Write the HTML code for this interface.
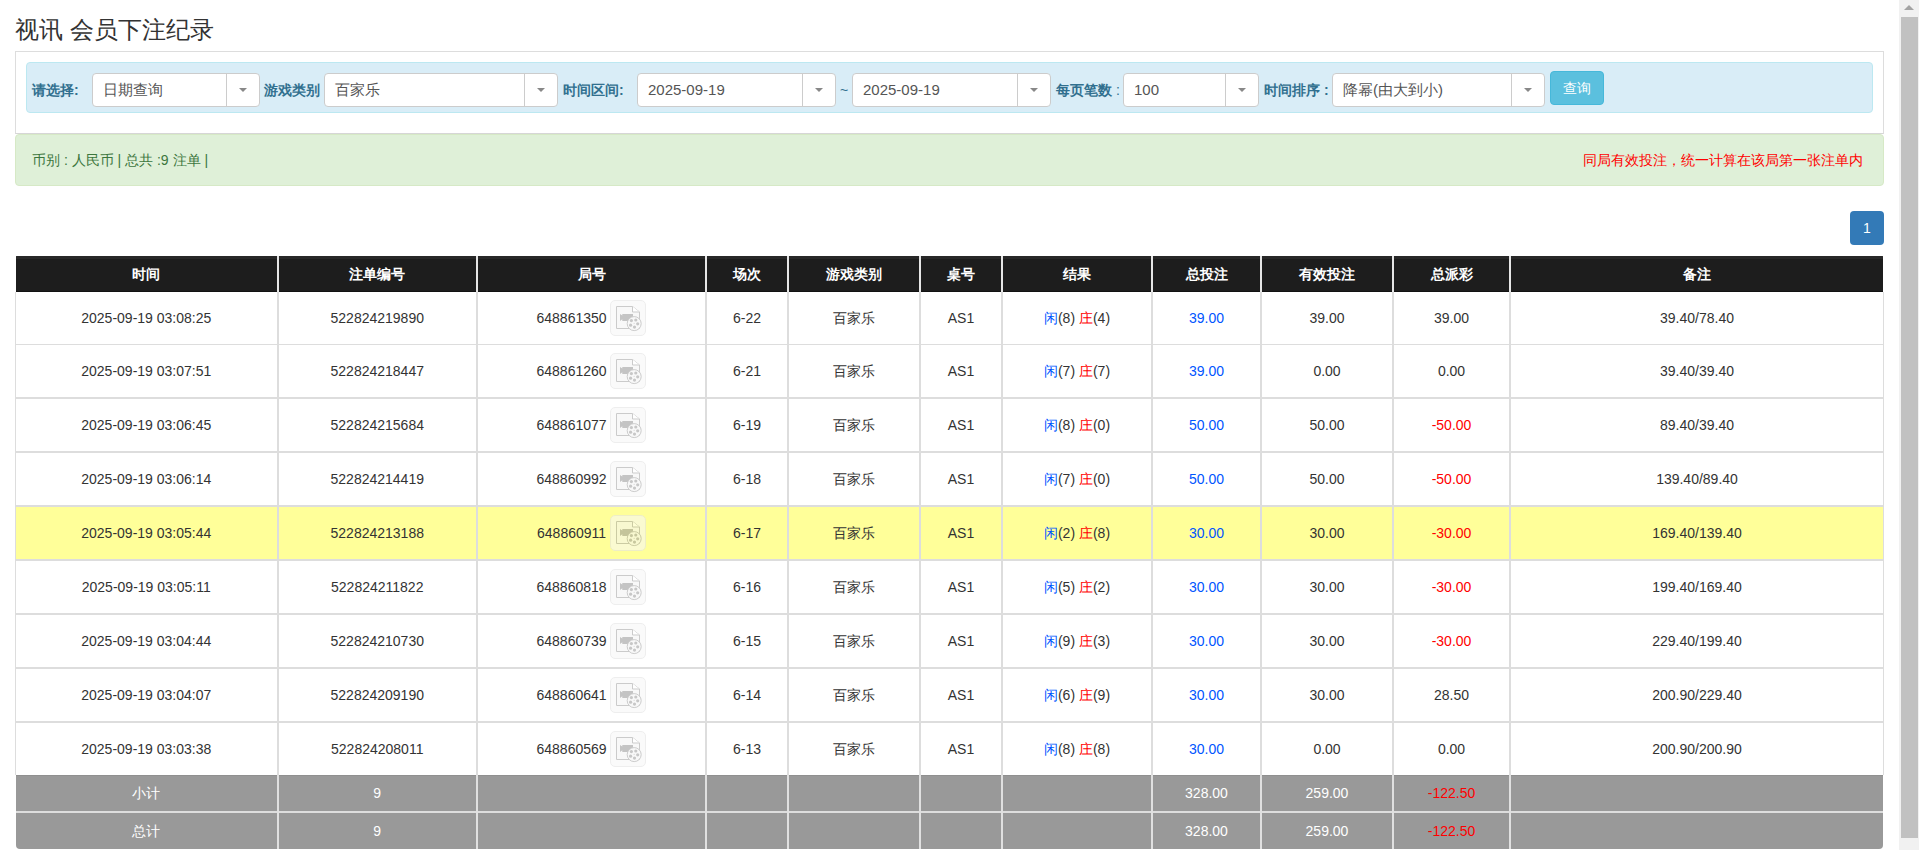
<!DOCTYPE html><html><head><meta charset="utf-8"><style>
html,body{margin:0;padding:0;background:#fff;}
body{font-family:"Liberation Sans",sans-serif;color:#333;width:1919px;height:850px;overflow:hidden;position:relative;}
.abs{position:absolute;}
.title{left:15px;top:12px;font-size:24px;line-height:36px;color:#333;white-space:nowrap;}
.panel{left:15px;top:51px;width:1867px;height:81px;border:1px solid #ddd;border-bottom:1px solid #d6d6d6;}
.bar{left:26px;top:62px;width:1845px;height:49px;border:1px solid #bce8f1;background:#d9edf7;border-radius:4px;}
.lbl{font-size:14px;font-weight:bold;color:#31708f;top:81px;line-height:18px;white-space:nowrap;}
.sel{top:73px;height:32px;border:1px solid #ccc;border-radius:4px;background:#fff;}
.sel .t{position:absolute;left:10px;top:6px;font-size:15px;line-height:20px;color:#555;white-space:nowrap;}
.sel .d{position:absolute;right:32px;top:0;width:1px;height:32px;background:#ccc;}
.sel .a{position:absolute;right:12px;top:14px;width:0;height:0;border-left:4px solid transparent;border-right:4px solid transparent;border-top:4px solid #888;}
.btn{left:1550px;top:71px;width:52px;height:32px;border:1px solid #46b8da;background:#5bc0de;border-radius:4px;color:#fff;font-size:14px;line-height:32px;text-align:center;}
.green{left:15px;top:134px;width:1867px;height:50px;border:1px solid #d6e9c6;background:#dff0d8;border-radius:4px;}
.gt{left:32px;top:151px;font-size:14px;line-height:18px;color:#3c763d;white-space:nowrap;}
.rt{right:56px;top:151px;font-size:14px;line-height:18px;color:#f00;white-space:nowrap;}
.pg{left:1850px;top:211px;width:34px;height:34px;background:#337ab7;border-radius:4px;color:#fff;font-size:14px;line-height:34px;text-align:center;}
.sb{left:1899px;top:0;width:20px;height:850px;background:#f1f1f1;}
.thumb{left:1901px;top:17px;width:17px;height:821px;background:#c1c1c1;}
.up{left:1904px;top:5px;width:0;height:0;border-left:5px solid transparent;border-right:5px solid transparent;border-bottom:5px solid #a3a3a3;}
.cell{position:absolute;text-align:center;white-space:nowrap;}
.fx{display:flex;align-items:center;justify-content:center;}
.ic{display:block;}
</style></head><body>

<div class="abs title">视讯 会员下注纪录</div>
<div class="abs panel"></div><div class="abs bar"></div>
<div class="abs lbl" style="left:32px">请选择:</div>
<div class="abs lbl" style="left:264px">游戏类别</div>
<div class="abs lbl" style="left:563px">时间区间:</div>
<div class="abs lbl" style="left:1056px">每页笔数<span style="font-weight:normal"> :</span></div>
<div class="abs lbl" style="left:1264px">时间排序 :</div>
<div class="abs lbl" style="left:840px;font-weight:normal">~</div>
<div class="abs sel" style="left:92px;width:166px"><span class="t">日期查询</span><i class="d"></i><i class="a"></i></div>
<div class="abs sel" style="left:324px;width:232px"><span class="t">百家乐</span><i class="d"></i><i class="a"></i></div>
<div class="abs sel" style="left:637px;width:197px"><span class="t">2025-09-19</span><i class="d"></i><i class="a"></i></div>
<div class="abs sel" style="left:852px;width:197px"><span class="t">2025-09-19</span><i class="d"></i><i class="a"></i></div>
<div class="abs sel" style="left:1123px;width:134px"><span class="t">100</span><i class="d"></i><i class="a"></i></div>
<div class="abs sel" style="left:1332px;width:211px"><span class="t">降幂(由大到小)</span><i class="d"></i><i class="a"></i></div>
<div class="abs btn">查询</div>
<div class="abs green"></div><div class="abs gt">币别 : 人民币 | 总共 :9 注单 |</div><div class="abs rt">同局有效投注，统一计算在该局第一张注单内</div>
<div class="abs pg">1</div>
<div class="abs" style="left:16px;top:256px;width:1867px;height:36px;background:#1d1d1d;border-radius:1px 1px 0 0"></div>
<div class="abs" style="left:16px;top:256px;width:1867px;height:3px;background:#282828;border-radius:1px 1px 0 0"></div>
<div class="abs" style="left:16px;top:291px;width:1867px;height:1px;background:#121212"></div>
<div class="abs" style="left:15px;top:292px;width:1869px;height:483px;background:#fff"></div>
<div class="abs" style="left:15px;top:507px;width:1869px;height:52px;background:#ffff99"></div>
<div class="abs" style="left:16px;top:775px;width:1867px;height:74px;background:#999;border-radius:0 0 4px 4px"></div>
<div class="abs" style="left:16px;top:775px;width:1867px;height:1px;background:#8f8f8f"></div>
<div class="abs" style="left:16px;top:811px;width:1867px;height:2px;background:#ddd"></div>
<div class="abs" style="left:15px;top:344px;width:1869px;height:1px;background:#ddd"></div>
<div class="abs" style="left:15px;top:397px;width:1869px;height:2px;background:#ddd"></div>
<div class="abs" style="left:15px;top:451px;width:1869px;height:2px;background:#ddd"></div>
<div class="abs" style="left:15px;top:505px;width:1869px;height:2px;background:#ddd"></div>
<div class="abs" style="left:15px;top:559px;width:1869px;height:2px;background:#ddd"></div>
<div class="abs" style="left:15px;top:613px;width:1869px;height:2px;background:#ddd"></div>
<div class="abs" style="left:15px;top:667px;width:1869px;height:2px;background:#ddd"></div>
<div class="abs" style="left:15px;top:721px;width:1869px;height:2px;background:#ddd"></div>
<div class="abs" style="left:15px;top:292px;width:1px;height:483px;background:#ddd"></div>
<div class="abs" style="left:1883px;top:292px;width:1px;height:483px;background:#ddd"></div>
<div class="abs" style="left:277px;top:256px;width:2px;height:36px;background:#e6e6e6"></div>
<div class="abs" style="left:277px;top:292px;width:2px;height:483px;background:#ddd"></div>
<div class="abs" style="left:277px;top:775px;width:2px;height:74px;background:#e0e0e0"></div>
<div class="abs" style="left:476px;top:256px;width:2px;height:36px;background:#e6e6e6"></div>
<div class="abs" style="left:476px;top:292px;width:2px;height:483px;background:#ddd"></div>
<div class="abs" style="left:476px;top:775px;width:2px;height:74px;background:#e0e0e0"></div>
<div class="abs" style="left:705px;top:256px;width:2px;height:36px;background:#e6e6e6"></div>
<div class="abs" style="left:705px;top:292px;width:2px;height:483px;background:#ddd"></div>
<div class="abs" style="left:705px;top:775px;width:2px;height:74px;background:#e0e0e0"></div>
<div class="abs" style="left:787px;top:256px;width:2px;height:36px;background:#e6e6e6"></div>
<div class="abs" style="left:787px;top:292px;width:2px;height:483px;background:#ddd"></div>
<div class="abs" style="left:787px;top:775px;width:2px;height:74px;background:#e0e0e0"></div>
<div class="abs" style="left:919px;top:256px;width:2px;height:36px;background:#e6e6e6"></div>
<div class="abs" style="left:919px;top:292px;width:2px;height:483px;background:#ddd"></div>
<div class="abs" style="left:919px;top:775px;width:2px;height:74px;background:#e0e0e0"></div>
<div class="abs" style="left:1001px;top:256px;width:2px;height:36px;background:#e6e6e6"></div>
<div class="abs" style="left:1001px;top:292px;width:2px;height:483px;background:#ddd"></div>
<div class="abs" style="left:1001px;top:775px;width:2px;height:74px;background:#e0e0e0"></div>
<div class="abs" style="left:1151px;top:256px;width:2px;height:36px;background:#e6e6e6"></div>
<div class="abs" style="left:1151px;top:292px;width:2px;height:483px;background:#ddd"></div>
<div class="abs" style="left:1151px;top:775px;width:2px;height:74px;background:#e0e0e0"></div>
<div class="abs" style="left:1260px;top:256px;width:2px;height:36px;background:#e6e6e6"></div>
<div class="abs" style="left:1260px;top:292px;width:2px;height:483px;background:#ddd"></div>
<div class="abs" style="left:1260px;top:775px;width:2px;height:74px;background:#e0e0e0"></div>
<div class="abs" style="left:1392px;top:256px;width:2px;height:36px;background:#e6e6e6"></div>
<div class="abs" style="left:1392px;top:292px;width:2px;height:483px;background:#ddd"></div>
<div class="abs" style="left:1392px;top:775px;width:2px;height:74px;background:#e0e0e0"></div>
<div class="abs" style="left:1509px;top:256px;width:2px;height:36px;background:#e6e6e6"></div>
<div class="abs" style="left:1509px;top:292px;width:2px;height:483px;background:#ddd"></div>
<div class="abs" style="left:1509px;top:775px;width:2px;height:74px;background:#e0e0e0"></div>
<div class="cell" style="left:15px;width:262.5px;top:256px;height:36px;line-height:36px;color:#fff;font-weight:bold;font-size:14px">时间</div>
<div class="cell" style="left:277.5px;width:199.5px;top:256px;height:36px;line-height:36px;color:#fff;font-weight:bold;font-size:14px">注单编号</div>
<div class="cell" style="left:477px;width:229px;top:256px;height:36px;line-height:36px;color:#fff;font-weight:bold;font-size:14px">局号</div>
<div class="cell" style="left:706px;width:82px;top:256px;height:36px;line-height:36px;color:#fff;font-weight:bold;font-size:14px">场次</div>
<div class="cell" style="left:788px;width:132px;top:256px;height:36px;line-height:36px;color:#fff;font-weight:bold;font-size:14px">游戏类别</div>
<div class="cell" style="left:920px;width:82px;top:256px;height:36px;line-height:36px;color:#fff;font-weight:bold;font-size:14px">桌号</div>
<div class="cell" style="left:1002px;width:150px;top:256px;height:36px;line-height:36px;color:#fff;font-weight:bold;font-size:14px">结果</div>
<div class="cell" style="left:1152px;width:109px;top:256px;height:36px;line-height:36px;color:#fff;font-weight:bold;font-size:14px">总投注</div>
<div class="cell" style="left:1261px;width:132px;top:256px;height:36px;line-height:36px;color:#fff;font-weight:bold;font-size:14px">有效投注</div>
<div class="cell" style="left:1393px;width:117px;top:256px;height:36px;line-height:36px;color:#fff;font-weight:bold;font-size:14px">总派彩</div>
<div class="cell" style="left:1510px;width:374px;top:256px;height:36px;line-height:36px;color:#fff;font-weight:bold;font-size:14px">备注</div>
<div class="cell" style="left:15px;width:262.5px;top:292px;height:52px;line-height:52px;font-size:14px;color:#333">2025-09-19 03:08:25</div>
<div class="cell" style="left:277.5px;width:199.5px;top:292px;height:52px;line-height:52px;font-size:14px;color:#333">522824219890</div>
<div class="cell fx" style="left:477px;width:229px;top:292px;height:52px;font-size:14px;color:#333"><span style="white-space:pre">648861350 </span><svg class="ic" width="36" height="36" viewBox="0 0 36 36"><g opacity="0.6"><rect x="0.5" y="0.5" width="35" height="35" rx="4.5" fill="#f7f7f7" stroke="#e4e4e4"/>
<path d="M6.5 6.5H22.5L29.5 12V28.5H6.5Z" fill="#f5f5f5" stroke="#aaaaaa"/><path d="M22.5 6.5V12H29.5" fill="#ffffff" stroke="#aaaaaa"/>
<path d="M10 13.9L12.3 15.6V13.9H23V20.9H12.3V19.2L10 20.9Z" fill="#9d9d9d"/>
<circle cx="24.2" cy="23.6" r="7" fill="#f5f5f5" stroke="#aaaaaa"/>
<g fill="#a2a2a2"><circle cx="21.4" cy="20.6" r="1.6"/><circle cx="25.8" cy="20" r="1.6"/><circle cx="27.7" cy="23.8" r="1.6"/><circle cx="24.5" cy="27.1" r="1.6"/><circle cx="20.6" cy="25.2" r="1.6"/><circle cx="24.1" cy="23.3" r="0.5"/></g>
</g></svg></div>
<div class="cell" style="left:706px;width:82px;top:292px;height:52px;line-height:52px;font-size:14px;color:#333">6-22</div>
<div class="cell" style="left:788px;width:132px;top:292px;height:52px;line-height:52px;font-size:14px;color:#333">百家乐</div>
<div class="cell" style="left:920px;width:82px;top:292px;height:52px;line-height:52px;font-size:14px;color:#333">AS1</div>
<div class="cell" style="left:1002px;width:150px;top:292px;height:52px;line-height:52px;font-size:14px;color:#333"><span style="color:#0055ff">闲</span>(8) <span style="color:#f00">庄</span>(4)</div>
<div class="cell" style="left:1152px;width:109px;top:292px;height:52px;line-height:52px;font-size:14px;color:#0055ff">39.00</div>
<div class="cell" style="left:1261px;width:132px;top:292px;height:52px;line-height:52px;font-size:14px;color:#333">39.00</div>
<div class="cell" style="left:1393px;width:117px;top:292px;height:52px;line-height:52px;font-size:14px;color:#333">39.00</div>
<div class="cell" style="left:1510px;width:374px;top:292px;height:52px;line-height:52px;font-size:14px;color:#333">39.40/78.40</div>
<div class="cell" style="left:15px;width:262.5px;top:345px;height:52px;line-height:52px;font-size:14px;color:#333">2025-09-19 03:07:51</div>
<div class="cell" style="left:277.5px;width:199.5px;top:345px;height:52px;line-height:52px;font-size:14px;color:#333">522824218447</div>
<div class="cell fx" style="left:477px;width:229px;top:345px;height:52px;font-size:14px;color:#333"><span style="white-space:pre">648861260 </span><svg class="ic" width="36" height="36" viewBox="0 0 36 36"><g opacity="0.6"><rect x="0.5" y="0.5" width="35" height="35" rx="4.5" fill="#f7f7f7" stroke="#e4e4e4"/>
<path d="M6.5 6.5H22.5L29.5 12V28.5H6.5Z" fill="#f5f5f5" stroke="#aaaaaa"/><path d="M22.5 6.5V12H29.5" fill="#ffffff" stroke="#aaaaaa"/>
<path d="M10 13.9L12.3 15.6V13.9H23V20.9H12.3V19.2L10 20.9Z" fill="#9d9d9d"/>
<circle cx="24.2" cy="23.6" r="7" fill="#f5f5f5" stroke="#aaaaaa"/>
<g fill="#a2a2a2"><circle cx="21.4" cy="20.6" r="1.6"/><circle cx="25.8" cy="20" r="1.6"/><circle cx="27.7" cy="23.8" r="1.6"/><circle cx="24.5" cy="27.1" r="1.6"/><circle cx="20.6" cy="25.2" r="1.6"/><circle cx="24.1" cy="23.3" r="0.5"/></g>
</g></svg></div>
<div class="cell" style="left:706px;width:82px;top:345px;height:52px;line-height:52px;font-size:14px;color:#333">6-21</div>
<div class="cell" style="left:788px;width:132px;top:345px;height:52px;line-height:52px;font-size:14px;color:#333">百家乐</div>
<div class="cell" style="left:920px;width:82px;top:345px;height:52px;line-height:52px;font-size:14px;color:#333">AS1</div>
<div class="cell" style="left:1002px;width:150px;top:345px;height:52px;line-height:52px;font-size:14px;color:#333"><span style="color:#0055ff">闲</span>(7) <span style="color:#f00">庄</span>(7)</div>
<div class="cell" style="left:1152px;width:109px;top:345px;height:52px;line-height:52px;font-size:14px;color:#0055ff">39.00</div>
<div class="cell" style="left:1261px;width:132px;top:345px;height:52px;line-height:52px;font-size:14px;color:#333">0.00</div>
<div class="cell" style="left:1393px;width:117px;top:345px;height:52px;line-height:52px;font-size:14px;color:#333">0.00</div>
<div class="cell" style="left:1510px;width:374px;top:345px;height:52px;line-height:52px;font-size:14px;color:#333">39.40/39.40</div>
<div class="cell" style="left:15px;width:262.5px;top:399px;height:52px;line-height:52px;font-size:14px;color:#333">2025-09-19 03:06:45</div>
<div class="cell" style="left:277.5px;width:199.5px;top:399px;height:52px;line-height:52px;font-size:14px;color:#333">522824215684</div>
<div class="cell fx" style="left:477px;width:229px;top:399px;height:52px;font-size:14px;color:#333"><span style="white-space:pre">648861077 </span><svg class="ic" width="36" height="36" viewBox="0 0 36 36"><g opacity="0.6"><rect x="0.5" y="0.5" width="35" height="35" rx="4.5" fill="#f7f7f7" stroke="#e4e4e4"/>
<path d="M6.5 6.5H22.5L29.5 12V28.5H6.5Z" fill="#f5f5f5" stroke="#aaaaaa"/><path d="M22.5 6.5V12H29.5" fill="#ffffff" stroke="#aaaaaa"/>
<path d="M10 13.9L12.3 15.6V13.9H23V20.9H12.3V19.2L10 20.9Z" fill="#9d9d9d"/>
<circle cx="24.2" cy="23.6" r="7" fill="#f5f5f5" stroke="#aaaaaa"/>
<g fill="#a2a2a2"><circle cx="21.4" cy="20.6" r="1.6"/><circle cx="25.8" cy="20" r="1.6"/><circle cx="27.7" cy="23.8" r="1.6"/><circle cx="24.5" cy="27.1" r="1.6"/><circle cx="20.6" cy="25.2" r="1.6"/><circle cx="24.1" cy="23.3" r="0.5"/></g>
</g></svg></div>
<div class="cell" style="left:706px;width:82px;top:399px;height:52px;line-height:52px;font-size:14px;color:#333">6-19</div>
<div class="cell" style="left:788px;width:132px;top:399px;height:52px;line-height:52px;font-size:14px;color:#333">百家乐</div>
<div class="cell" style="left:920px;width:82px;top:399px;height:52px;line-height:52px;font-size:14px;color:#333">AS1</div>
<div class="cell" style="left:1002px;width:150px;top:399px;height:52px;line-height:52px;font-size:14px;color:#333"><span style="color:#0055ff">闲</span>(8) <span style="color:#f00">庄</span>(0)</div>
<div class="cell" style="left:1152px;width:109px;top:399px;height:52px;line-height:52px;font-size:14px;color:#0055ff">50.00</div>
<div class="cell" style="left:1261px;width:132px;top:399px;height:52px;line-height:52px;font-size:14px;color:#333">50.00</div>
<div class="cell" style="left:1393px;width:117px;top:399px;height:52px;line-height:52px;font-size:14px;color:#f00">-50.00</div>
<div class="cell" style="left:1510px;width:374px;top:399px;height:52px;line-height:52px;font-size:14px;color:#333">89.40/39.40</div>
<div class="cell" style="left:15px;width:262.5px;top:453px;height:52px;line-height:52px;font-size:14px;color:#333">2025-09-19 03:06:14</div>
<div class="cell" style="left:277.5px;width:199.5px;top:453px;height:52px;line-height:52px;font-size:14px;color:#333">522824214419</div>
<div class="cell fx" style="left:477px;width:229px;top:453px;height:52px;font-size:14px;color:#333"><span style="white-space:pre">648860992 </span><svg class="ic" width="36" height="36" viewBox="0 0 36 36"><g opacity="0.6"><rect x="0.5" y="0.5" width="35" height="35" rx="4.5" fill="#f7f7f7" stroke="#e4e4e4"/>
<path d="M6.5 6.5H22.5L29.5 12V28.5H6.5Z" fill="#f5f5f5" stroke="#aaaaaa"/><path d="M22.5 6.5V12H29.5" fill="#ffffff" stroke="#aaaaaa"/>
<path d="M10 13.9L12.3 15.6V13.9H23V20.9H12.3V19.2L10 20.9Z" fill="#9d9d9d"/>
<circle cx="24.2" cy="23.6" r="7" fill="#f5f5f5" stroke="#aaaaaa"/>
<g fill="#a2a2a2"><circle cx="21.4" cy="20.6" r="1.6"/><circle cx="25.8" cy="20" r="1.6"/><circle cx="27.7" cy="23.8" r="1.6"/><circle cx="24.5" cy="27.1" r="1.6"/><circle cx="20.6" cy="25.2" r="1.6"/><circle cx="24.1" cy="23.3" r="0.5"/></g>
</g></svg></div>
<div class="cell" style="left:706px;width:82px;top:453px;height:52px;line-height:52px;font-size:14px;color:#333">6-18</div>
<div class="cell" style="left:788px;width:132px;top:453px;height:52px;line-height:52px;font-size:14px;color:#333">百家乐</div>
<div class="cell" style="left:920px;width:82px;top:453px;height:52px;line-height:52px;font-size:14px;color:#333">AS1</div>
<div class="cell" style="left:1002px;width:150px;top:453px;height:52px;line-height:52px;font-size:14px;color:#333"><span style="color:#0055ff">闲</span>(7) <span style="color:#f00">庄</span>(0)</div>
<div class="cell" style="left:1152px;width:109px;top:453px;height:52px;line-height:52px;font-size:14px;color:#0055ff">50.00</div>
<div class="cell" style="left:1261px;width:132px;top:453px;height:52px;line-height:52px;font-size:14px;color:#333">50.00</div>
<div class="cell" style="left:1393px;width:117px;top:453px;height:52px;line-height:52px;font-size:14px;color:#f00">-50.00</div>
<div class="cell" style="left:1510px;width:374px;top:453px;height:52px;line-height:52px;font-size:14px;color:#333">139.40/89.40</div>
<div class="cell" style="left:15px;width:262.5px;top:507px;height:52px;line-height:52px;font-size:14px;color:#333">2025-09-19 03:05:44</div>
<div class="cell" style="left:277.5px;width:199.5px;top:507px;height:52px;line-height:52px;font-size:14px;color:#333">522824213188</div>
<div class="cell fx" style="left:477px;width:229px;top:507px;height:52px;font-size:14px;color:#333"><span style="white-space:pre">648860911 </span><svg class="ic" width="36" height="36" viewBox="0 0 36 36"><g opacity="0.6"><rect x="0.5" y="0.5" width="35" height="35" rx="4.5" fill="#f7f7f7" stroke="#e4e4e4"/>
<path d="M6.5 6.5H22.5L29.5 12V28.5H6.5Z" fill="#f5f5f5" stroke="#aaaaaa"/><path d="M22.5 6.5V12H29.5" fill="#ffffff" stroke="#aaaaaa"/>
<path d="M10 13.9L12.3 15.6V13.9H23V20.9H12.3V19.2L10 20.9Z" fill="#9d9d9d"/>
<circle cx="24.2" cy="23.6" r="7" fill="#f5f5f5" stroke="#aaaaaa"/>
<g fill="#a2a2a2"><circle cx="21.4" cy="20.6" r="1.6"/><circle cx="25.8" cy="20" r="1.6"/><circle cx="27.7" cy="23.8" r="1.6"/><circle cx="24.5" cy="27.1" r="1.6"/><circle cx="20.6" cy="25.2" r="1.6"/><circle cx="24.1" cy="23.3" r="0.5"/></g>
</g></svg></div>
<div class="cell" style="left:706px;width:82px;top:507px;height:52px;line-height:52px;font-size:14px;color:#333">6-17</div>
<div class="cell" style="left:788px;width:132px;top:507px;height:52px;line-height:52px;font-size:14px;color:#333">百家乐</div>
<div class="cell" style="left:920px;width:82px;top:507px;height:52px;line-height:52px;font-size:14px;color:#333">AS1</div>
<div class="cell" style="left:1002px;width:150px;top:507px;height:52px;line-height:52px;font-size:14px;color:#333"><span style="color:#0055ff">闲</span>(2) <span style="color:#f00">庄</span>(8)</div>
<div class="cell" style="left:1152px;width:109px;top:507px;height:52px;line-height:52px;font-size:14px;color:#0055ff">30.00</div>
<div class="cell" style="left:1261px;width:132px;top:507px;height:52px;line-height:52px;font-size:14px;color:#333">30.00</div>
<div class="cell" style="left:1393px;width:117px;top:507px;height:52px;line-height:52px;font-size:14px;color:#f00">-30.00</div>
<div class="cell" style="left:1510px;width:374px;top:507px;height:52px;line-height:52px;font-size:14px;color:#333">169.40/139.40</div>
<div class="cell" style="left:15px;width:262.5px;top:561px;height:52px;line-height:52px;font-size:14px;color:#333">2025-09-19 03:05:11</div>
<div class="cell" style="left:277.5px;width:199.5px;top:561px;height:52px;line-height:52px;font-size:14px;color:#333">522824211822</div>
<div class="cell fx" style="left:477px;width:229px;top:561px;height:52px;font-size:14px;color:#333"><span style="white-space:pre">648860818 </span><svg class="ic" width="36" height="36" viewBox="0 0 36 36"><g opacity="0.6"><rect x="0.5" y="0.5" width="35" height="35" rx="4.5" fill="#f7f7f7" stroke="#e4e4e4"/>
<path d="M6.5 6.5H22.5L29.5 12V28.5H6.5Z" fill="#f5f5f5" stroke="#aaaaaa"/><path d="M22.5 6.5V12H29.5" fill="#ffffff" stroke="#aaaaaa"/>
<path d="M10 13.9L12.3 15.6V13.9H23V20.9H12.3V19.2L10 20.9Z" fill="#9d9d9d"/>
<circle cx="24.2" cy="23.6" r="7" fill="#f5f5f5" stroke="#aaaaaa"/>
<g fill="#a2a2a2"><circle cx="21.4" cy="20.6" r="1.6"/><circle cx="25.8" cy="20" r="1.6"/><circle cx="27.7" cy="23.8" r="1.6"/><circle cx="24.5" cy="27.1" r="1.6"/><circle cx="20.6" cy="25.2" r="1.6"/><circle cx="24.1" cy="23.3" r="0.5"/></g>
</g></svg></div>
<div class="cell" style="left:706px;width:82px;top:561px;height:52px;line-height:52px;font-size:14px;color:#333">6-16</div>
<div class="cell" style="left:788px;width:132px;top:561px;height:52px;line-height:52px;font-size:14px;color:#333">百家乐</div>
<div class="cell" style="left:920px;width:82px;top:561px;height:52px;line-height:52px;font-size:14px;color:#333">AS1</div>
<div class="cell" style="left:1002px;width:150px;top:561px;height:52px;line-height:52px;font-size:14px;color:#333"><span style="color:#0055ff">闲</span>(5) <span style="color:#f00">庄</span>(2)</div>
<div class="cell" style="left:1152px;width:109px;top:561px;height:52px;line-height:52px;font-size:14px;color:#0055ff">30.00</div>
<div class="cell" style="left:1261px;width:132px;top:561px;height:52px;line-height:52px;font-size:14px;color:#333">30.00</div>
<div class="cell" style="left:1393px;width:117px;top:561px;height:52px;line-height:52px;font-size:14px;color:#f00">-30.00</div>
<div class="cell" style="left:1510px;width:374px;top:561px;height:52px;line-height:52px;font-size:14px;color:#333">199.40/169.40</div>
<div class="cell" style="left:15px;width:262.5px;top:615px;height:52px;line-height:52px;font-size:14px;color:#333">2025-09-19 03:04:44</div>
<div class="cell" style="left:277.5px;width:199.5px;top:615px;height:52px;line-height:52px;font-size:14px;color:#333">522824210730</div>
<div class="cell fx" style="left:477px;width:229px;top:615px;height:52px;font-size:14px;color:#333"><span style="white-space:pre">648860739 </span><svg class="ic" width="36" height="36" viewBox="0 0 36 36"><g opacity="0.6"><rect x="0.5" y="0.5" width="35" height="35" rx="4.5" fill="#f7f7f7" stroke="#e4e4e4"/>
<path d="M6.5 6.5H22.5L29.5 12V28.5H6.5Z" fill="#f5f5f5" stroke="#aaaaaa"/><path d="M22.5 6.5V12H29.5" fill="#ffffff" stroke="#aaaaaa"/>
<path d="M10 13.9L12.3 15.6V13.9H23V20.9H12.3V19.2L10 20.9Z" fill="#9d9d9d"/>
<circle cx="24.2" cy="23.6" r="7" fill="#f5f5f5" stroke="#aaaaaa"/>
<g fill="#a2a2a2"><circle cx="21.4" cy="20.6" r="1.6"/><circle cx="25.8" cy="20" r="1.6"/><circle cx="27.7" cy="23.8" r="1.6"/><circle cx="24.5" cy="27.1" r="1.6"/><circle cx="20.6" cy="25.2" r="1.6"/><circle cx="24.1" cy="23.3" r="0.5"/></g>
</g></svg></div>
<div class="cell" style="left:706px;width:82px;top:615px;height:52px;line-height:52px;font-size:14px;color:#333">6-15</div>
<div class="cell" style="left:788px;width:132px;top:615px;height:52px;line-height:52px;font-size:14px;color:#333">百家乐</div>
<div class="cell" style="left:920px;width:82px;top:615px;height:52px;line-height:52px;font-size:14px;color:#333">AS1</div>
<div class="cell" style="left:1002px;width:150px;top:615px;height:52px;line-height:52px;font-size:14px;color:#333"><span style="color:#0055ff">闲</span>(9) <span style="color:#f00">庄</span>(3)</div>
<div class="cell" style="left:1152px;width:109px;top:615px;height:52px;line-height:52px;font-size:14px;color:#0055ff">30.00</div>
<div class="cell" style="left:1261px;width:132px;top:615px;height:52px;line-height:52px;font-size:14px;color:#333">30.00</div>
<div class="cell" style="left:1393px;width:117px;top:615px;height:52px;line-height:52px;font-size:14px;color:#f00">-30.00</div>
<div class="cell" style="left:1510px;width:374px;top:615px;height:52px;line-height:52px;font-size:14px;color:#333">229.40/199.40</div>
<div class="cell" style="left:15px;width:262.5px;top:669px;height:52px;line-height:52px;font-size:14px;color:#333">2025-09-19 03:04:07</div>
<div class="cell" style="left:277.5px;width:199.5px;top:669px;height:52px;line-height:52px;font-size:14px;color:#333">522824209190</div>
<div class="cell fx" style="left:477px;width:229px;top:669px;height:52px;font-size:14px;color:#333"><span style="white-space:pre">648860641 </span><svg class="ic" width="36" height="36" viewBox="0 0 36 36"><g opacity="0.6"><rect x="0.5" y="0.5" width="35" height="35" rx="4.5" fill="#f7f7f7" stroke="#e4e4e4"/>
<path d="M6.5 6.5H22.5L29.5 12V28.5H6.5Z" fill="#f5f5f5" stroke="#aaaaaa"/><path d="M22.5 6.5V12H29.5" fill="#ffffff" stroke="#aaaaaa"/>
<path d="M10 13.9L12.3 15.6V13.9H23V20.9H12.3V19.2L10 20.9Z" fill="#9d9d9d"/>
<circle cx="24.2" cy="23.6" r="7" fill="#f5f5f5" stroke="#aaaaaa"/>
<g fill="#a2a2a2"><circle cx="21.4" cy="20.6" r="1.6"/><circle cx="25.8" cy="20" r="1.6"/><circle cx="27.7" cy="23.8" r="1.6"/><circle cx="24.5" cy="27.1" r="1.6"/><circle cx="20.6" cy="25.2" r="1.6"/><circle cx="24.1" cy="23.3" r="0.5"/></g>
</g></svg></div>
<div class="cell" style="left:706px;width:82px;top:669px;height:52px;line-height:52px;font-size:14px;color:#333">6-14</div>
<div class="cell" style="left:788px;width:132px;top:669px;height:52px;line-height:52px;font-size:14px;color:#333">百家乐</div>
<div class="cell" style="left:920px;width:82px;top:669px;height:52px;line-height:52px;font-size:14px;color:#333">AS1</div>
<div class="cell" style="left:1002px;width:150px;top:669px;height:52px;line-height:52px;font-size:14px;color:#333"><span style="color:#0055ff">闲</span>(6) <span style="color:#f00">庄</span>(9)</div>
<div class="cell" style="left:1152px;width:109px;top:669px;height:52px;line-height:52px;font-size:14px;color:#0055ff">30.00</div>
<div class="cell" style="left:1261px;width:132px;top:669px;height:52px;line-height:52px;font-size:14px;color:#333">30.00</div>
<div class="cell" style="left:1393px;width:117px;top:669px;height:52px;line-height:52px;font-size:14px;color:#333">28.50</div>
<div class="cell" style="left:1510px;width:374px;top:669px;height:52px;line-height:52px;font-size:14px;color:#333">200.90/229.40</div>
<div class="cell" style="left:15px;width:262.5px;top:723px;height:52px;line-height:52px;font-size:14px;color:#333">2025-09-19 03:03:38</div>
<div class="cell" style="left:277.5px;width:199.5px;top:723px;height:52px;line-height:52px;font-size:14px;color:#333">522824208011</div>
<div class="cell fx" style="left:477px;width:229px;top:723px;height:52px;font-size:14px;color:#333"><span style="white-space:pre">648860569 </span><svg class="ic" width="36" height="36" viewBox="0 0 36 36"><g opacity="0.6"><rect x="0.5" y="0.5" width="35" height="35" rx="4.5" fill="#f7f7f7" stroke="#e4e4e4"/>
<path d="M6.5 6.5H22.5L29.5 12V28.5H6.5Z" fill="#f5f5f5" stroke="#aaaaaa"/><path d="M22.5 6.5V12H29.5" fill="#ffffff" stroke="#aaaaaa"/>
<path d="M10 13.9L12.3 15.6V13.9H23V20.9H12.3V19.2L10 20.9Z" fill="#9d9d9d"/>
<circle cx="24.2" cy="23.6" r="7" fill="#f5f5f5" stroke="#aaaaaa"/>
<g fill="#a2a2a2"><circle cx="21.4" cy="20.6" r="1.6"/><circle cx="25.8" cy="20" r="1.6"/><circle cx="27.7" cy="23.8" r="1.6"/><circle cx="24.5" cy="27.1" r="1.6"/><circle cx="20.6" cy="25.2" r="1.6"/><circle cx="24.1" cy="23.3" r="0.5"/></g>
</g></svg></div>
<div class="cell" style="left:706px;width:82px;top:723px;height:52px;line-height:52px;font-size:14px;color:#333">6-13</div>
<div class="cell" style="left:788px;width:132px;top:723px;height:52px;line-height:52px;font-size:14px;color:#333">百家乐</div>
<div class="cell" style="left:920px;width:82px;top:723px;height:52px;line-height:52px;font-size:14px;color:#333">AS1</div>
<div class="cell" style="left:1002px;width:150px;top:723px;height:52px;line-height:52px;font-size:14px;color:#333"><span style="color:#0055ff">闲</span>(8) <span style="color:#f00">庄</span>(8)</div>
<div class="cell" style="left:1152px;width:109px;top:723px;height:52px;line-height:52px;font-size:14px;color:#0055ff">30.00</div>
<div class="cell" style="left:1261px;width:132px;top:723px;height:52px;line-height:52px;font-size:14px;color:#333">0.00</div>
<div class="cell" style="left:1393px;width:117px;top:723px;height:52px;line-height:52px;font-size:14px;color:#333">0.00</div>
<div class="cell" style="left:1510px;width:374px;top:723px;height:52px;line-height:52px;font-size:14px;color:#333">200.90/200.90</div>
<div class="cell" style="left:15px;width:262.5px;top:776px;height:35px;line-height:35px;font-size:14px;color:#fff">小计</div>
<div class="cell" style="left:277.5px;width:199.5px;top:776px;height:35px;line-height:35px;font-size:14px;color:#fff">9</div>
<div class="cell" style="left:477px;width:229px;top:776px;height:35px;line-height:35px;font-size:14px;color:#fff"></div>
<div class="cell" style="left:706px;width:82px;top:776px;height:35px;line-height:35px;font-size:14px;color:#fff"></div>
<div class="cell" style="left:788px;width:132px;top:776px;height:35px;line-height:35px;font-size:14px;color:#fff"></div>
<div class="cell" style="left:920px;width:82px;top:776px;height:35px;line-height:35px;font-size:14px;color:#fff"></div>
<div class="cell" style="left:1002px;width:150px;top:776px;height:35px;line-height:35px;font-size:14px;color:#fff"></div>
<div class="cell" style="left:1152px;width:109px;top:776px;height:35px;line-height:35px;font-size:14px;color:#fff">328.00</div>
<div class="cell" style="left:1261px;width:132px;top:776px;height:35px;line-height:35px;font-size:14px;color:#fff">259.00</div>
<div class="cell" style="left:1393px;width:117px;top:776px;height:35px;line-height:35px;font-size:14px;color:#f00">-122.50</div>
<div class="cell" style="left:1510px;width:374px;top:776px;height:35px;line-height:35px;font-size:14px;color:#fff"></div>
<div class="cell" style="left:15px;width:262.5px;top:814px;height:35px;line-height:35px;font-size:14px;color:#fff">总计</div>
<div class="cell" style="left:277.5px;width:199.5px;top:814px;height:35px;line-height:35px;font-size:14px;color:#fff">9</div>
<div class="cell" style="left:477px;width:229px;top:814px;height:35px;line-height:35px;font-size:14px;color:#fff"></div>
<div class="cell" style="left:706px;width:82px;top:814px;height:35px;line-height:35px;font-size:14px;color:#fff"></div>
<div class="cell" style="left:788px;width:132px;top:814px;height:35px;line-height:35px;font-size:14px;color:#fff"></div>
<div class="cell" style="left:920px;width:82px;top:814px;height:35px;line-height:35px;font-size:14px;color:#fff"></div>
<div class="cell" style="left:1002px;width:150px;top:814px;height:35px;line-height:35px;font-size:14px;color:#fff"></div>
<div class="cell" style="left:1152px;width:109px;top:814px;height:35px;line-height:35px;font-size:14px;color:#fff">328.00</div>
<div class="cell" style="left:1261px;width:132px;top:814px;height:35px;line-height:35px;font-size:14px;color:#fff">259.00</div>
<div class="cell" style="left:1393px;width:117px;top:814px;height:35px;line-height:35px;font-size:14px;color:#f00">-122.50</div>
<div class="cell" style="left:1510px;width:374px;top:814px;height:35px;line-height:35px;font-size:14px;color:#fff"></div>
<div class="abs sb"></div><div class="abs thumb"></div><div class="abs up"></div>
</body></html>
